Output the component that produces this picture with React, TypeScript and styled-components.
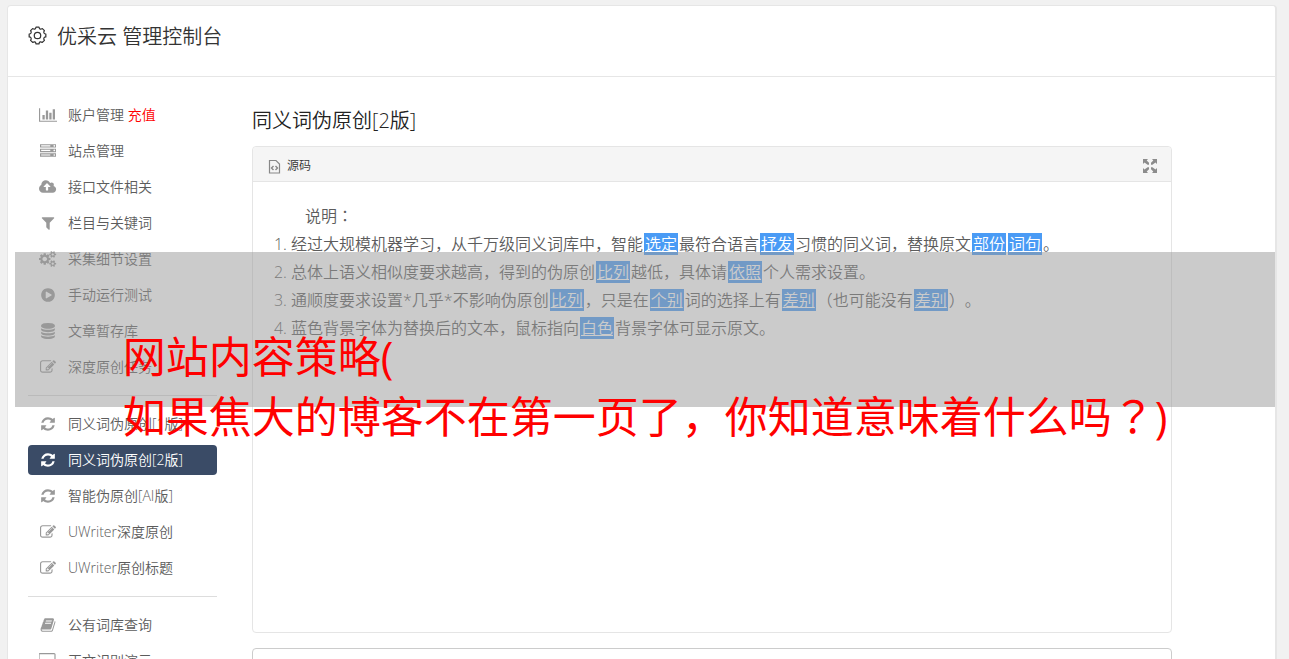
import React from 'react';
import styled, { createGlobalStyle } from 'styled-components';

const GlobalStyle = createGlobalStyle`
  * { box-sizing: border-box; }
  html { height: 100%; overflow: hidden; background: #f1f1f1; }
  body {
    margin: 0;
    height: 100%;
    overflow: hidden;
    font-family: "Open Sans", "Noto Sans CJK SC", sans-serif;
    font-size: 14px;
    font-weight: 350;
    text-spacing-trim: space-all;
    color: #666;
  }
`;

const Page = styled.div`
  position: relative;
  padding: 5px 12px 0 7px;
`;

const Card = styled.div`
  background: #fff;
  border: 1px solid #e6e6e6;
  border-right-width: 2px;
  border-radius: 4px 4px 0 0;
`;

const Header = styled.header`
  display: flex;
  align-items: center;
  gap: 10px;
  height: 71px;
  padding: 0 20px 8px;
  border-bottom: 1px solid #e6e6e6;
  color: #333;

  svg {
    margin-bottom: 3px;
  }
`;

const PageTitle = styled.h1`
  margin: 0;
  font-size: 20px;
  line-height: 28px;
  font-weight: 350;
`;

const Columns = styled.div`
  display: flex;
  gap: 35px;
  padding: 23px 103px 0 20px;
`;

const Nav = styled.nav`
  flex: none;
  display: flex;
  flex-direction: column;
  gap: 6px;
  width: 189px;
`;

const NavItem = styled.a<{ $active?: boolean }>`
  display: grid;
  grid-template-columns: 20px 1fr;
  column-gap: 10px;
  align-items: center;
  height: 30px;
  padding: 0 10px;
  border-radius: 4px;
  line-height: 20px;
  white-space: nowrap;
  text-decoration: none;
  color: ${(p) => (p.$active ? '#fff' : '#5c5c5c')};
  background: ${(p) => (p.$active ? '#3a4b66' : 'transparent')};

  svg {
    justify-self: center;
    color: ${(p) => (p.$active ? '#fff' : '#999')};
  }
`;

const Recharge = styled.span`
  color: #f00;
`;

const Divider = styled.hr`
  width: 100%;
  height: 1px;
  margin: 7px 0;
  border: 0;
  background: #ddd;
`;

const Main = styled.main`
  flex: 1;
  min-width: 0;
`;

const SectionTitle = styled.h2`
  margin: 6px 0 11px;
  font-size: 20px;
  line-height: 29px;
  font-weight: 350;
  color: #222;
`;

const Editor = styled.section`
  border: 1px solid #e5e5e5;
  border-radius: 4px;
`;

const Toolbar = styled.div`
  display: flex;
  align-items: center;
  justify-content: space-between;
  height: 35px;
  padding: 3px 14px 0 15px;
  border-bottom: 1px solid #e5e5e5;
  border-radius: 4px 4px 0 0;
  background: #f5f5f5;
`;

const ToolButton = styled.button`
  display: flex;
  align-items: center;
  gap: 6px;
  padding: 0;
  border: 0;
  background: none;
  font-family: inherit;
  font-size: 12px;
  font-weight: 350;
  line-height: 20px;
  color: #333;
`;

const Content = styled.div`
  min-height: 450px;
  padding: 20px;
  font-size: 16px;
  line-height: 28px;
  color: #5c5c5c;
`;

const Lead = styled.p`
  margin: 0;
  text-indent: 2em;
`;

const Rules = styled.ol`
  margin: 0;
  padding-left: 18px;
`;

const Swap = styled.u`
  margin: 0 1px;
  padding: 0 1px;
  background: #4a9bf5;
  color: #fff;
`;

const CenteredMark = styled.span`
  font-family: "Noto Sans CJK JP", sans-serif;
  line-height: 1;
`;

const ResultBox = styled.textarea`
  display: block;
  width: 100%;
  height: 120px;
  margin-top: 15px;
  border: 1px solid #ccc;
  border-radius: 4px;
  resize: none;
  background: #fff;
`;

const Banner = styled.div`
  position: absolute;
  top: 252px;
  left: 15px;
  right: 14px;
  height: 155px;
  padding-top: 75px;
  display: flex;
  justify-content: center;
  background: rgba(153, 153, 153, 0.51);
`;

const BannerText = styled.p`
  margin: 0;
  font-size: 43px;
  font-weight: 400;
  line-height: 60px;
  white-space: nowrap;
  color: #f00;
`;

const faPaths = {
  chart:
    'M640 896v512h-256v-512h256zm384-512v1024h-256v-1024h256zm1024 1152v128h-2048v-1536h128v1408h1920zm-640-896v768h-256v-768h256zm384-384v1152h-256v-1152h256z',
  server:
    'M128 1408h1024v-128h-1024v128zm0-512h1024v-128h-1024v128zm1568 448q0-40-28-68t-68-28-68 28-28 68 28 68 68 28 68-28 28-68zm-1568-960h1024v-128h-1024v128zm1568 448q0-40-28-68t-68-28-68 28-28 68 28 68 68 28 68-28 28-68zm0-512q0-40-28-68t-68-28-68 28-28 68 28 68 68 28 68-28 28-68zm96 832v384h-1792v-384h1792zm0-512v384h-1792v-384h1792zm0-512v384h-1792v-384h1792z',
  cloud:
    'M1280 864q0-14-9-23l-352-352q-9-9-23-9t-23 9l-351 351q-10 12-10 24 0 14 9 23t23 9h224v352q0 13 9.5 22.5t22.5 9.5h192q13 0 22.5-9.5t9.5-22.5v-352h224q13 0 22.5-9.5t9.5-22.5zm640 288q0 159-112.5 271.5t-271.5 112.5h-1088q-185 0-316.5-131.5t-131.5-316.5q0-130 70-240t188-165q-2-30-2-43 0-212 150-362t362-150q156 0 285.5 87t188.5 231q71-62 166-62 106 0 181 75t75 181q0 76-41 138 130 31 213.5 135.5t83.5 238.5z',
  filter:
    'M1595 295q17 41-14 70l-493 493v742q0 42-39 59-13 5-25 5-27 0-45-19l-256-256q-19-19-19-45v-486l-493-493q-31-29-14-70 17-39 59-39h1280q42 0 59 39z',
  cogs:
    'M896 896q0-106-75-181t-181-75-181 75-75 181 75 181 181 75 181-75 75-181zm768 512q0-52-38-90t-90-38-90 38-38 90q0 53 37.5 90.5t90.5 37.5 90.5-37.5 37.5-90.5zm0-1024q0-52-38-90t-90-38-90 38-38 90q0 53 37.5 90.5t90.5 37.5 90.5-37.5 37.5-90.5zm-384 421v185q0 10-7 19.5t-16 10.5l-155 24q-11 35-32 76 34 48 90 115 7 11 7 20 0 12-7 19-23 30-82.5 89.5t-78.5 59.5q-11 0-21-7l-115-90q-37 19-77 31-11 108-23 155-7 24-30 24h-186q-11 0-20-7.5t-10-17.5l-23-153q-34-10-75-31l-118 89q-7 7-20 7-11 0-21-8-144-133-144-160 0-9 7-19 10-14 41-53t47-61q-23-44-35-82l-152-24q-10-1-17-9.5t-7-19.5v-185q0-10 7-19.5t16-10.5l155-24q11-35 32-76-34-48-90-115-7-11-7-20 0-12 7-20 22-30 82-89t79-59q11 0 21 7l115 90q34-18 77-32 11-108 23-154 7-24 30-24h186q11 0 20 7.5t10 17.5l23 153q34 10 75 31l118-89q8-7 20-7 11 0 21 8 144 133 144 160 0 8-7 19-12 16-42 54t-45 60q23 48 34 82l152 23q10 2 17 10.5t7 19.5zm640 533v140q0 16-149 31-12 27-30 52 51 113 51 138 0 4-4 7-122 71-124 71-8 0-46-47t-52-68q-20 2-30 2t-30-2q-14 21-52 68t-46 47q-2 0-124-71-4-3-4-7 0-25 51-138-18-25-30-52-149-15-149-31v-140q0-16 149-31 13-29 30-52-51-113-51-138 0-4 4-7 4-2 35-20t59-34 30-16q8 0 46 46.5t52 67.5q20-2 30-2t30 2q51-71 92-112l6-2q4 0 124 70 4 3 4 7 0 25-51 138 17 23 30 52 149 15 149 31zm0-1024v140q0 16-149 31-12 27-30 52 51 113 51 138 0 4-4 7-122 71-124 71-8 0-46-47t-52-68q-20 2-30 2t-30-2q-14 21-52 68t-46 47q-2 0-124-71-4-3-4-7 0-25 51-138-18-25-30-52-149-15-149-31v-140q0-16 149-31 13-29 30-52-51-113-51-138 0-4 4-7 4-2 35-20t59-34 30-16q8 0 46 46.5t52 67.5q20-2 30-2t30 2q51-71 92-112l6-2q4 0 124 70 4 3 4 7 0 25-51 138 17 23 30 52 149 15 149 31z',
  play:
    'M896 128q209 0 385.5 103t279.5 279.5 103 385.5-103 385.5-279.5 279.5-385.5 103-385.5-103-279.5-279.5-103-385.5 103-385.5 279.5-279.5 385.5-103zm384 823q32-18 32-55t-32-55l-544-320q-31-19-64-1-32 19-32 56v640q0 37 32 56 16 8 32 8 17 0 32-9z',
  database:
    'M896 768q237 0 443-43t325-127v170q0 69-103 128t-280 93.5-385 34.5-385-34.5-280-93.5-103-128v-170q119 84 325 127t443 43zm0 768q237 0 443-43t325-127v170q0 69-103 128t-280 93.5-385 34.5-385-34.5-280-93.5-103-128v-170q119 84 325 127t443 43zm0-384q237 0 443-43t325-127v170q0 69-103 128t-280 93.5-385 34.5-385-34.5-280-93.5-103-128v-170q119 84 325 127t443 43zm0-1152q208 0 385 34.5t280 93.5 103 128v128q0 69-103 128t-280 93.5-385 34.5-385-34.5-280-93.5-103-128v-128q0-69 103-128t280-93.5 385-34.5z',
  edit:
    'M888 1184l116-116-152-152-116 116v56h96v96h56zm440-720q-16-16-33 1l-350 350q-17 17-1 33t33-1l350-350q17-17 1-33zm80 594v190q0 119-84.5 203.5t-203.5 84.5h-832q-119 0-203.5-84.5t-84.5-203.5v-832q0-119 84.5-203.5t203.5-84.5h832q63 0 117 25 15 7 18 23 3 17-9 29l-49 49q-14 14-32 8-23-6-45-6h-832q-66 0-113 47t-47 113v832q0 66 47 113t113 47h832q66 0 113-47t47-113v-126q0-13 9-22l64-64q15-15 35-7t20 29zm-96-738l288 288-672 672h-288v-288zm444 132l-92 92-288-288 92-92q28-28 68-28t68 28l152 152q28 28 28 68t-28 68z',
  refresh:
    'M1639 1056q0 5-1 7-64 268-268 434.5t-478 166.5q-146 0-282.5-55t-243.5-157l-129 129q-19 19-45 19t-45-19-19-45v-448q0-26 19-45t45-19h448q26 0 45 19t19 45-19 45l-137 137q71 66 161 102t187 36q134 0 250-65t186-179q11-17 53-117 8-23 30-23h192q13 0 22.5 9.5t9.5 22.5zm25-800v448q0 26-19 45t-45 19h-448q-26 0-45-19t-19-45 19-45l138-138q-148-137-349-137-134 0-250 65t-186 179q-11 17-53 117-8 23-30 23h-199q-13 0-22.5-9.5t-9.5-22.5v-7q65-268 270-434.5t480-166.5q146 0 284 55.5t245 156.5l130-129q19-19 45-19t45 19 19 45z',
  book:
    'M1703 478q40 57 18 129l-275 906q-19 64-76.5 107.5t-122.5 43.5h-923q-77 0-148.5-53.5t-99.5-131.5q-24-67-2-127 0-4 3-27t4-37q1-8-3-21.5t-3-19.5q2-11 8-21t16.5-23.5 16.5-23.5q23-38 45-91.5t30-91.5q3-10 .5-30t-.5-28q3-11 17-28t17-23q21-36 42-92t25-90q1-9-2.500-32t.5-28q4-13 22-30.500t22-22.500q19-26 42.500-84.500t27.500-96.500q1-8-3-25.500t-2-26.500q2-8 9-18t18-23 17-21q8-12 16.500-30.500t15-35 16-36 19.500-32 26.500-23.500 36-11.500 47.500 5.500l-1 3q38-9 51-9h761q74 0 114 56t18 130l-274 906q-36 119-71.500 153.500t-128.500 34.500h-869q-27 0-38 15-11 16-1 43 24 70 144 70h923q29 0 56-15.500t35-41.500l300-987q7-22 5-57 38 15 59 43zm-1064 2q-4 13 2 22.500t20 9.500h608q13 0 25.500-9.500t16.500-22.500l21-64q4-13-2-22.500t-20-9.500h-608q-13 0-25.500 9.500t-16.500 22.500zm-83 256q-4 13 2 22.500t20 9.500h608q13 0 25.500-9.500t16.500-22.500l21-64q4-13-2-22.500t-20-9.500h-608q-13 0-25.500 9.500t-16.500 22.500z',
  desktop:
    'M1728 992v-832q0-13-9.500-22.500t-22.500-9.500h-1600q-13 0-22.500 9.500t-9.500 22.500v832q0 13 9.500 22.500t22.500 9.500h1600q13 0 22.500-9.500t9.500-22.500zm128-832v1088q0 66-47 113t-113 47h-544q0 37 16 77.500t32 71 16 43.500q0 26-19 45t-45 19h-512q-26 0-45-19t-19-45q0-14 16-44t32-70 16-78h-544q-66 0-113-47t-47-113v-1088q0-66 47-113t113-47h1600q66 0 113 47t47 113z',
};

type IconName = keyof typeof faPaths;

const wideIcons: Partial<Record<IconName, number>> = { chart: 2048, cloud: 1920, cogs: 1920, desktop: 1920 };

function Icon({ name }: { name: IconName }) {
  const units = wideIcons[name] ?? 1792;
  return (
    <svg width={(units * 16) / 1792} height={16} viewBox={`0 0 ${units} 1792`} fill="currentColor" aria-hidden="true">
      <path d={faPaths[name]} />
    </svg>
  );
}

function GearIcon() {
  const teeth = Array.from({ length: 8 }, (_, i) => i * 45);
  const at = (deg: number, r: number) => {
    const a = (deg * Math.PI) / 180;
    return `${(10 + r * Math.sin(a)).toFixed(2)} ${(10 - r * Math.cos(a)).toFixed(2)}`;
  };
  const d =
    teeth
      .map((t, i) => `${i ? 'L' : 'M'}${at(t - 10, 8.9)}L${at(t + 10, 8.9)}Q${at(t + 22.5, 5.8)} ${at(t + 35, 8.9)}`)
      .join('') + 'Z';
  return (
    <svg width="19" height="19" viewBox="0 0 20 20" fill="none" stroke="currentColor" strokeWidth="1.3" strokeLinejoin="round" aria-hidden="true">
      <path d={d} />
      <circle cx="10" cy="10" r="3.4" />
    </svg>
  );
}

function SourceIcon() {
  return (
    <svg width="13" height="16" viewBox="0 0 13 16" fill="none" stroke="#888" aria-hidden="true">
      <path d="M1.5 2.5h6.5l3.5 3.5v9h-10z" strokeWidth="1.2" />
      <path d="M5.500 8l-2 2 2 2M7.500 8l2 2-2 2" strokeWidth="1.4" />
    </svg>
  );
}

function MaximizeIcon() {
  return (
    <svg width="14" height="14" viewBox="0 0 14 14" fill="#8c8c8c" aria-hidden="true">
      <path d="M0 0h5L3.700 1.500 6 3.800v2H4.600L1.500 3.500 0 5zM14 0H9l1.300 1.500L8 3.800v2h1.400l3.100-2.300L14 5zM0 14h5l-1.300-1.500L6 10.200v-2H4.600l-3.100 2.300L0 9zM14 14H9l1.300-1.500L8 10.200v-2h1.400l3.100 2.300L14 9z" />
    </svg>
  );
}

type Entry = { icon: IconName; label: string; active?: boolean; extra?: string };

const groups: Entry[][] = [
  [
    { icon: 'chart', label: '账户管理', extra: '充值' },
    { icon: 'server', label: '站点管理' },
    { icon: 'cloud', label: '接口文件相关' },
    { icon: 'filter', label: '栏目与关键词' },
    { icon: 'cogs', label: '采集细节设置' },
    { icon: 'play', label: '手动运行测试' },
    { icon: 'database', label: '文章暂存库' },
    { icon: 'edit', label: '深度原创任务' },
  ],
  [
    { icon: 'refresh', label: '同义词伪原创[1版]' },
    { icon: 'refresh', label: '同义词伪原创[2版]', active: true },
    { icon: 'refresh', label: '智能伪原创[AI版]' },
    { icon: 'edit', label: 'UWriter深度原创' },
    { icon: 'edit', label: 'UWriter原创标题' },
  ],
  [
    { icon: 'book', label: '公有词库查询' },
    { icon: 'desktop', label: '正文识别演示' },
  ],
];

export default function App() {
  return (
    <>
      <GlobalStyle />
      <Page>
        <Card>
          <Header>
            <GearIcon />
            <PageTitle>优采云 管理控制台</PageTitle>
          </Header>
          <Columns>
            <Nav>
              {groups.map((group, i) => (
                <React.Fragment key={i}>
                  {i > 0 && <Divider />}
                  {group.map((item) => (
                    <NavItem key={item.label} href="#" $active={item.active}>
                      <Icon name={item.icon} />
                      <span>
                        {item.label}
                        {item.extra && <Recharge> {item.extra}</Recharge>}
                      </span>
                    </NavItem>
                  ))}
                </React.Fragment>
              ))}
            </Nav>
            <Main>
              <SectionTitle>同义词伪原创[2版]</SectionTitle>
              <Editor>
                <Toolbar>
                  <ToolButton type="button">
                    <SourceIcon />
                    源码
                  </ToolButton>
                  <ToolButton type="button" aria-label="全屏">
                    <MaximizeIcon />
                  </ToolButton>
                </Toolbar>
                <Content>
                  <Lead>
                    说明<CenteredMark>：</CenteredMark>
                  </Lead>
                  <Rules>
                    <li>
                      经过大规模机器学习，从千万级同义词库中，智能<Swap>选定</Swap>最符合语言<Swap>抒发</Swap>
                      习惯的同义词，替换原文<Swap>部份</Swap><Swap>词句</Swap>。
                    </li>
                    <li>
                      总体上语义相似度要求越高，得到的伪原创<Swap>比列</Swap>越低，具体请<Swap>依照</Swap>个人需求设置。
                    </li>
                    <li>
                      通顺度要求设置*几乎*不影响伪原创<Swap>比列</Swap>，只是在<Swap>个别</Swap>词的选择上有
                      <Swap>差别</Swap>（也可能没有<Swap>差别</Swap>）。
                    </li>
                    <li>
                      蓝色背景字体为替换后的文本，鼠标指向<Swap>白色</Swap>背景字体可显示原文。
                    </li>
                  </Rules>
                </Content>
              </Editor>
              <ResultBox aria-label="结果" />
            </Main>
          </Columns>
        </Card>
        <Banner>
          <BannerText>
            网站内容策略(
            <br />
            如果焦大的博客不在第一页了，你知道意味着什么吗<CenteredMark>？</CenteredMark>)
          </BannerText>
        </Banner>
      </Page>
    </>
  );
}
